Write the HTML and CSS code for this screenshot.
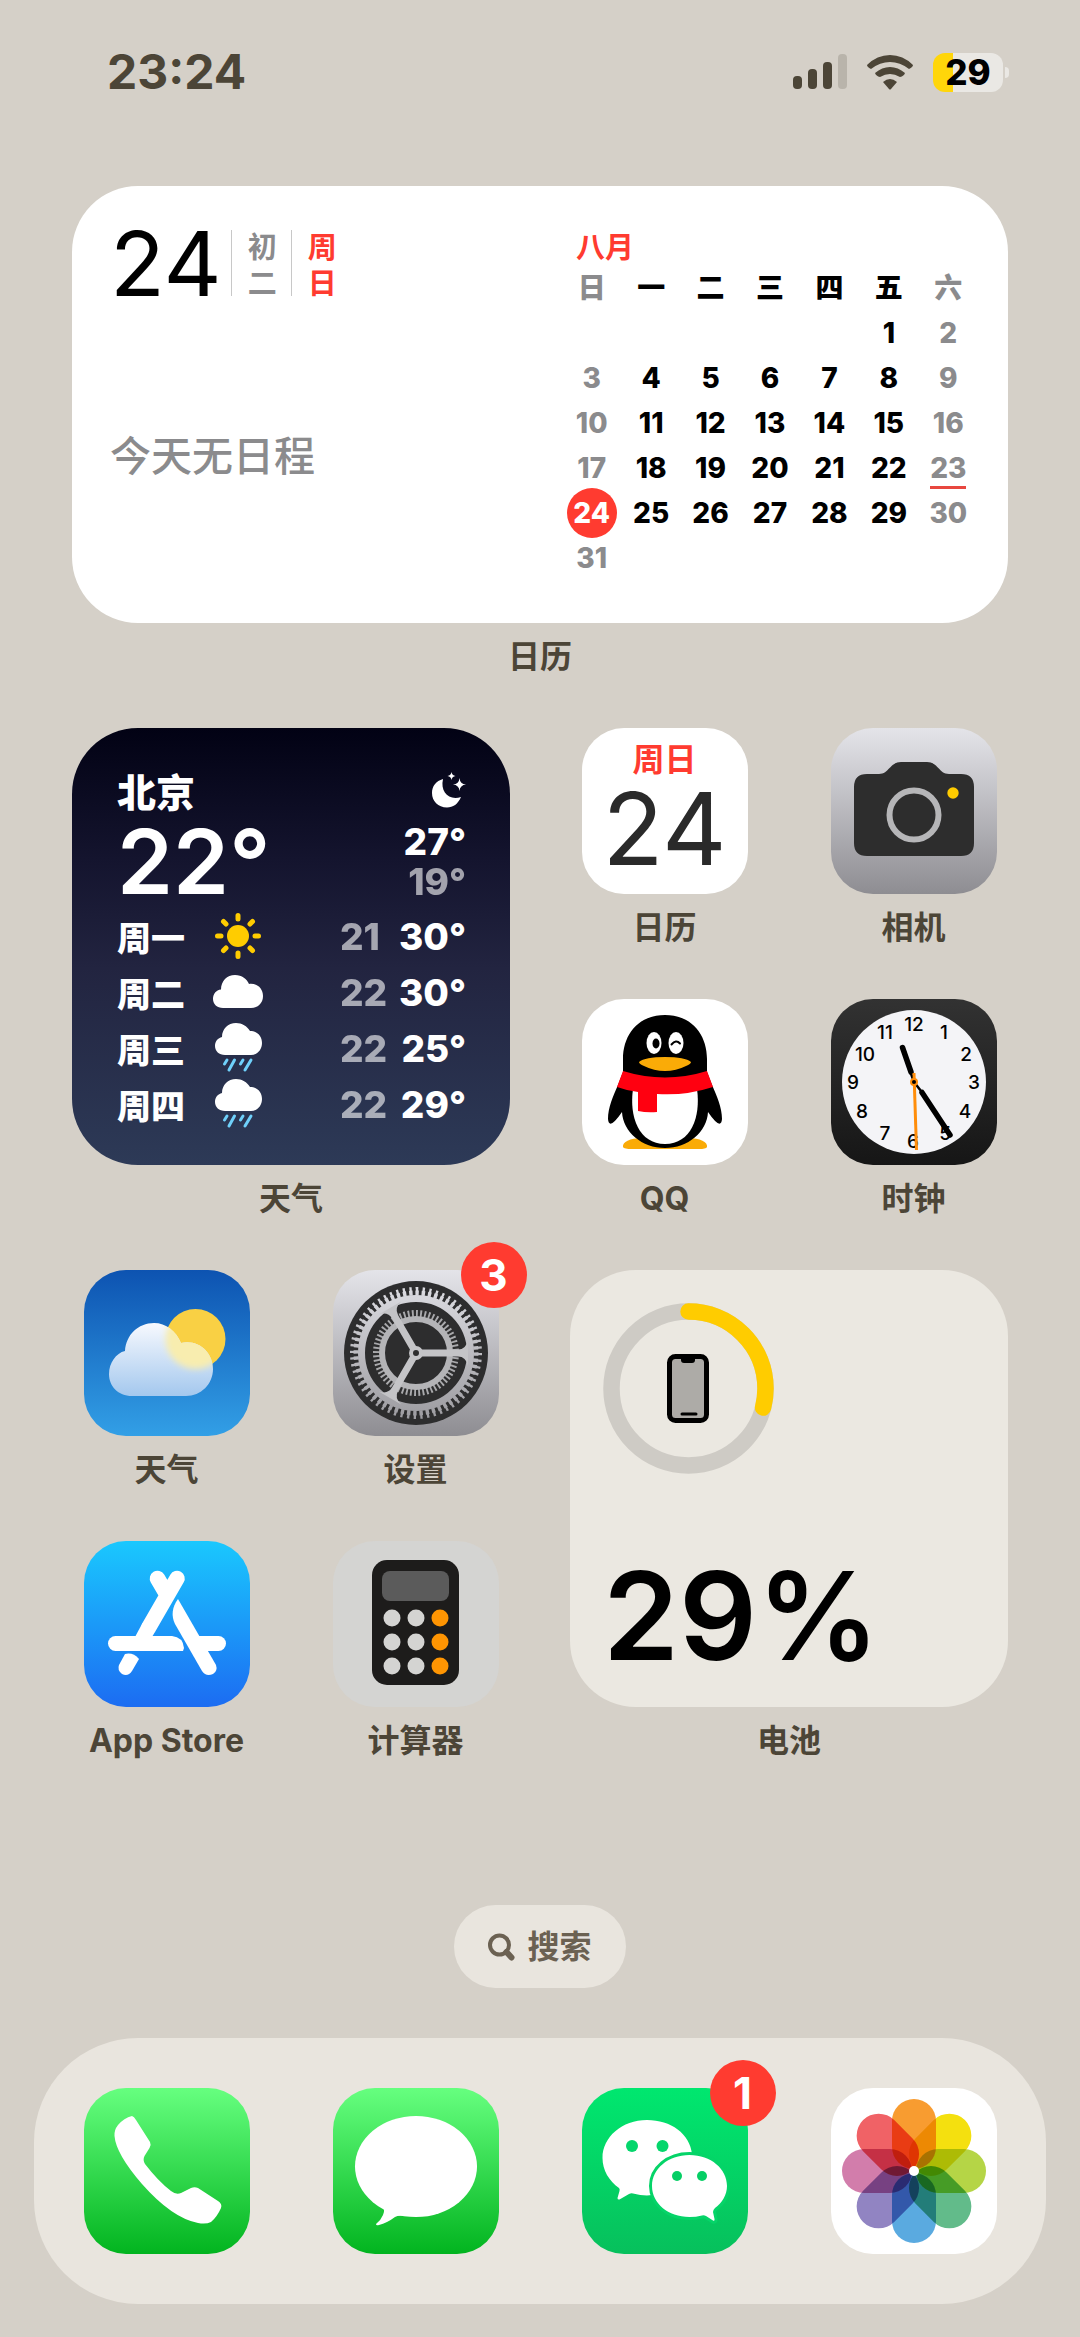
FILE: index.html
```html
<!DOCTYPE html>
<html lang="zh-CN">
<head>
    <meta charset="UTF-8">
    <meta name="viewport" content="width=device-width, initial-scale=1.0">
    <title>主屏幕</title>
    <link rel="stylesheet" href="styles.css">
</head>
<body>
<header class="status">
    <time class="status-time">23:24</time>
    <div class="status-icons">
        <svg class="signal" viewBox="0 0 54 36">
            <rect x="0" y="22" width="9" height="13" rx="4"/>
            <rect x="15" y="15" width="9" height="20" rx="4"/>
            <rect x="30" y="8" width="9" height="27" rx="4"/>
            <rect x="45" y="0" width="9" height="35" rx="4" opacity=".2"/>
        </svg>
        <svg class="wifi" viewBox="0 0 46 35">
            <path d="M0 10 Q10 0 23 0 Q36 0 46 10 Q46 12 42 14 Q33 7 23 7 Q13 7 4 14 Q0 12 0 10Z"/>
            <path d="M8 18 Q15 12 23 12 Q31 12 38 18 Q37 21 33 22 Q28 19 23 19 Q18 19 13 22 Q9 21 8 18Z"/>
            <path d="M16 27 Q23 21 30 27 L24 34 Q23 35 22 34Z"/>
        </svg>
        <div class="battery">29</div>
    </div>
</header>

<main class="home">
    <section class="widget widget-wide">
        <div class="card calendar">
            <div class="today">
                <div class="today-date">
                    <span class="today-num">24</span>
                    <span class="today-col">初二</span>
                    <span class="today-col red">周日</span>
                </div>
                <p class="today-note">今天无日程</p>
            </div>
            <table class="month">
                <caption>八月</caption>
                <thead>
                    <tr><th>日</th><th>一</th><th>二</th><th>三</th><th>四</th><th>五</th><th>六</th></tr>
                </thead>
                <tbody>
                    <tr><td></td><td></td><td></td><td></td><td></td><td>1</td><td>2</td></tr>
                    <tr><td>3</td><td>4</td><td>5</td><td>6</td><td>7</td><td>8</td><td>9</td></tr>
                    <tr><td>10</td><td>11</td><td>12</td><td>13</td><td>14</td><td>15</td><td>16</td></tr>
                    <tr><td>17</td><td>18</td><td>19</td><td>20</td><td>21</td><td>22</td><td><span class="marked">23</span></td></tr>
                    <tr><td><span class="current">24</span></td><td>25</td><td>26</td><td>27</td><td>28</td><td>29</td><td>30</td></tr>
                    <tr><td>31</td><td></td><td></td><td></td><td></td><td></td><td></td></tr>
                </tbody>
            </table>
        </div>
        <span class="label">日历</span>
    </section>

    <section class="widget">
        <div class="card weather">
            <div class="weather-head">
                <span class="city">北京</span>
                <svg class="moon" viewBox="0 0 34 36">
                    <path d="M11 7 C8 20 17 29 29 25 C26 32 21 35.500 15 35.500 C6 35.500 0 29 0 21 C0 14 4 9 11 7Z"/>
                    <path d="M27.500 6 Q28 12 34 12.500 Q28 13 27.500 19 Q27 13 21 12.500 Q27 12 27.500 6Z"/>
                    <path d="M19.500 0 Q20 3.500 23.500 4 Q20 4.500 19.500 8 Q19 4.500 15.500 4 Q19 3.500 19.500 0Z"/>
                </svg>
            </div>
            <div class="weather-now">
                <span class="temp">22°</span>
                <div class="range">
                    <span>27°</span>
                    <span class="low">19°</span>
                </div>
            </div>
            <ul class="forecast">
                <li>
                    <span>周一</span>
                    <svg viewBox="0 0 50 50">
                        <circle cx="25" cy="25" r="11" fill="#ffcc00"/>
                        <g stroke="#ffcc00" stroke-width="5" stroke-linecap="round">
                            <path d="M25 4.500V8M25 42V45.500M4.500 25H8M42 25H45.500M10.500 10.500L13 13M37 37L39.500 39.500M10.500 39.500L13 37M37 13L39.500 10.500"/>
                        </g>
                    </svg>
                    <span class="low">21</span>
                    <span>30°</span>
                </li>
                <li>
                    <span>周二</span>
                    <svg viewBox="0 0 50 50">
                        <path fill="#fff" d="M10 41 C4 41 0 37 0 32 C0 27 3 23 8 22.500 C8 14 14 8 22 8 C29 8 34 12 36 17 C44 16 50 21 50 29 C50 36 45 41 38 41Z"/>
                    </svg>
                    <span class="low">22</span>
                    <span>30°</span>
                </li>
                <li>
                    <span>周三</span>
                    <svg viewBox="0 0 50 50">
                        <path fill="#fff" d="M12 32 C6 32 2 28 2 23 C2 18 5 15 9 14 C9 6 15 0 23 0 C29 0 34 3 37 8 C44 8 49 13 49 20 C49 27 44 32 38 32Z"/>
                        <path stroke="#6fd0fa" stroke-width="3" stroke-linecap="round" d="M14 37L11.500 41M21.500 37L16 47M30 37L27.500 41M38 37L32 47"/>
                    </svg>
                    <span class="low">22</span>
                    <span>25°</span>
                </li>
                <li>
                    <span>周四</span>
                    <svg viewBox="0 0 50 50">
                        <path fill="#fff" d="M12 32 C6 32 2 28 2 23 C2 18 5 15 9 14 C9 6 15 0 23 0 C29 0 34 3 37 8 C44 8 49 13 49 20 C49 27 44 32 38 32Z"/>
                        <path stroke="#6fd0fa" stroke-width="3" stroke-linecap="round" d="M14 37L11.500 41M21.500 37L16 47M30 37L27.500 41M38 37L32 47"/>
                    </svg>
                    <span class="low">22</span>
                    <span>29°</span>
                </li>
            </ul>
        </div>
        <span class="label">天气</span>
    </section>

    <a class="app" href="#calendar">
        <span class="icon icon-calendar">
            <span class="icon-day">周日</span>
            <span class="icon-num">24</span>
        </span>
        <span class="label">日历</span>
    </a>

    <a class="app" href="#camera">
        <span class="icon icon-metal">
            <svg viewBox="0 0 166 166">
                <path fill="#2d2d2d" d="M36 46 H48 C58 46 59 34 70 34 H96 C107 34 108 46 118 46 H130 Q143 46 143 59 V115 Q143 128 130 128 H36 Q23 128 23 115 V59 Q23 46 36 46Z"/>
                <circle cx="83" cy="87" r="24.500" fill="none" stroke="#b6b6b8" stroke-width="6"/>
                <circle cx="122" cy="65" r="5.700" fill="#ffcc00"/>
            </svg>
        </span>
        <span class="label">相机</span>
    </a>

    <a class="app" href="#qq">
        <span class="icon icon-white">
            <svg viewBox="0 0 166 166">
                <path fill="#faab07" d="M60 139 C48 139 40 143 41 148 Q42 150 50 150 H117 Q124 150 125 148 C126 143 118 139 106 139Z"/>
                <path d="M83 16 C56 16 41 36 41 60 V73 L36 86 C31 97 26 109 26 120 Q27 132 40 113 C41 133 60 149 83 149 C106 149 125 133 126 113 Q139 132 140 120 C140 109 135 97 130 86 L125 73 V60 C125 36 110 16 83 16Z"/>
                <path fill="#fff" d="M51 90 H115 C119 118 109 145 83 145 C57 145 47 118 51 90Z"/>
                <ellipse cx="72" cy="44" rx="7.500" ry="11" fill="#fff"/>
                <ellipse cx="94" cy="44" rx="7.500" ry="11" fill="#fff"/>
                <ellipse cx="74" cy="44.500" rx="3.500" ry="5"/>
                <path d="M89.500 45.500 Q94 40 98 44.500" fill="none" stroke="#000" stroke-width="2" stroke-linecap="round"/>
                <path fill="#faab07" d="M57 63 Q63 58 83 58 Q103 58 109 63 Q109 65 104 67 Q94 72 83 72 Q72 72 62 67 Q57 65 57 63Z"/>
                <path fill="#ff0010" d="M41 72 Q83 85 125 72 L131 88 Q103 97 75 95 V113 Q65 114 56 112 V93 Q46 92 35 88Z"/>
            </svg>
        </span>
        <span class="label">QQ</span>
    </a>

    <a class="app" href="#clock">
        <span class="icon icon-clock">
            <svg viewBox="0 0 166 166">
                <circle cx="83" cy="83" r="72" fill="#f4f4f7"/>
                <g font-size="19" font-weight="500" text-anchor="middle">
                    <text x="83" y="32">12</text>
                    <text x="113" y="40">1</text>
                    <text x="135" y="62">2</text>
                    <text x="143" y="90">3</text>
                    <text x="134" y="119">4</text>
                    <text x="114" y="141">5</text>
                    <text x="82" y="149">6</text>
                    <text x="54" y="141">7</text>
                    <text x="31" y="119">8</text>
                    <text x="22" y="90">9</text>
                    <text x="34" y="62">10</text>
                    <text x="54" y="40">11</text>
                </g>
                <g stroke="#000" stroke-linecap="round">
                    <path stroke-width="2.500" d="M83 83L78 69M83 83L90 92"/>
                    <path stroke-width="5.500" d="M80 73L71.500 48.500M91 93.500L119 136"/>
                </g>
                <path stroke="#ff8d0a" stroke-width="3" d="M83 74L85.500 151"/>
                <circle cx="83" cy="83" r="3" fill="#000" stroke="#ff8d0a" stroke-width="2"/>
            </svg>
        </span>
        <span class="label">时钟</span>
    </a>

    <a class="app" href="#weather">
        <span class="icon icon-weather">
            <svg viewBox="0 0 166 166">
                <defs>
                    <linearGradient id="cloud" x1="0" y1="53" x2="0" y2="126" gradientUnits="userSpaceOnUse">
                        <stop offset="0" stop-color="#f7f9fe"/>
                        <stop offset="1" stop-color="#a4c8ee"/>
                    </linearGradient>
                    <filter id="soft"><feGaussianBlur stdDeviation="3"/></filter>
                    <clipPath id="cloudShape">
                        <path d="M48 126 C34 126 25 116 25 104 C25 93 32 83 41 81 C42 65 54 53 70 53 C82 53 92 61 97 73 C115 69 129 83 129 99 C129 114 117 126 102 126Z"/>
                    </clipPath>
                </defs>
                <circle cx="111.500" cy="69" r="30" fill="#f9d044"/>
                <g clip-path="url(#cloudShape)">
                    <rect width="166" height="166" fill="url(#cloud)"/>
                    <circle cx="111.500" cy="69" r="30" fill="#f8edaf" filter="url(#soft)"/>
                </g>
            </svg>
        </span>
        <span class="label">天气</span>
    </a>

    <a class="app" href="#settings">
        <span class="icon icon-metal">
            <svg viewBox="0 0 166 166">
                <defs>
                    <linearGradient id="metal" x1="0" y1="-83" x2="0" y2="83" gradientUnits="userSpaceOnUse">
                        <stop offset="0" stop-color="#e4e4e9"/>
                        <stop offset="1" stop-color="#949398"/>
                    </linearGradient>
                </defs>
                <g transform="translate(83 83)" fill="none">
                    <circle r="72" fill="#2d2d2e"/>
                    <!-- outer gear -->
                    <circle r="62" stroke="url(#metal)" stroke-width="8" pathLength="240" stroke-dasharray="1.400 2.600"/>
                    <circle r="60" stroke="url(#metal)" stroke-width="5" pathLength="240" stroke-dasharray="2.200 1.800" stroke-dashoffset=".4"/>
                    <circle r="54.500" stroke="url(#metal)" stroke-width="7"/>
                    <!-- inner gear -->
                    <circle r="39.500" stroke="#a9a9ac" stroke-width="7" pathLength="240" stroke-dasharray="1.800 2.200"/>
                    <circle r="34" stroke="#b4b4b7" stroke-width="6"/>
                    <!-- spokes -->
                    <g fill="#c4c4c7">
                        <path d="M0 -3.500 H42 Q50 -3.500 52 -13 V13 Q50 3.500 42 3.500 H0Z"/>
                        <path d="M0 -3.500 H42 Q50 -3.500 52 -13 V13 Q50 3.500 42 3.500 H0Z" transform="rotate(120)"/>
                        <path d="M0 -3.500 H42 Q50 -3.500 52 -13 V13 Q50 3.500 42 3.500 H0Z" transform="rotate(240)"/>
                        <circle r="7"/>
                    </g>
                    <circle r="3" fill="#2d2d2e"/>
                </g>
            </svg>
            <span class="badge">3</span>
        </span>
        <span class="label">设置</span>
    </a>

    <section class="widget">
        <div class="card power">
            <svg class="ring" viewBox="0 0 171 171">
                <g fill="none" stroke-width="16.500">
                    <circle cx="85.500" cy="85.500" r="77" stroke="#cecbc5"/>
                    <circle cx="85.500" cy="85.500" r="77" stroke="#ffcc00" stroke-linecap="round" pathLength="100" stroke-dasharray="29 71" transform="rotate(-90 85.500 85.500)"/>
                </g>
                <rect x="66.500" y="53.500" width="37" height="64" rx="6" fill="#adaba7" stroke="#000" stroke-width="5"/>
                <path d="M78 54 H92 V57 Q92 60 89 60 H81 Q78 60 78 57Z"/>
                <path d="M79 111H93" stroke="#000" stroke-width="3" stroke-linecap="round"/>
            </svg>
            <span class="percent">29%</span>
        </div>
        <span class="label">电池</span>
    </section>

    <a class="app" href="#appstore">
        <span class="icon icon-store">
            <svg viewBox="0 0 166 166" fill="#fff">
                <path stroke="#fff" stroke-width="15.500" stroke-linecap="round" d="M93 37.500L65 86M73.500 37.500L82 52"/>
                <path d="M58.500 82 L71.500 90 L68 96 H51Z"/>
                <path d="M31.500 95 H88 Q99 96 100 107 L99 110 H31.500 A7.500 7.500 0 0 1 31.500 95Z"/>
                <path d="M112 95 H134.500 A7.500 7.500 0 0 1 134.500 110 H121Z"/>
                <path d="M94 58 L132 124 Q134 130 129 133 Q122 136 118 130 L91 83 C87 75 88 66 94 58Z"/>
                <path d="M41 113 Q49 111 55 118 L48 130 Q44 136 38 133 Q33 129 35 124Z"/>
            </svg>
        </span>
        <span class="label">App Store</span>
    </a>

    <a class="app" href="#calculator">
        <span class="icon icon-calc">
            <svg viewBox="0 0 166 166">
                <rect x="39" y="19" width="87" height="125" rx="15" fill="#1d1c1b"/>
                <rect x="49" y="30" width="67" height="30" rx="8" fill="#5b5b5b"/>
                <g fill="#d4d4d2">
                    <circle cx="59" cy="77" r="8.500"/><circle cx="83" cy="77" r="8.500"/>
                    <circle cx="59" cy="101" r="8.500"/><circle cx="83" cy="101" r="8.500"/>
                    <circle cx="59" cy="125" r="8.500"/><circle cx="83" cy="125" r="8.500"/>
                </g>
                <g fill="#ff9502">
                    <circle cx="107" cy="77" r="8.500"/>
                    <circle cx="107" cy="101" r="8.500"/>
                    <circle cx="107" cy="125" r="8.500"/>
                </g>
            </svg>
        </span>
        <span class="label">计算器</span>
    </a>
</main>

<button class="search" type="button">
    <svg viewBox="0 0 27 28" fill="none" stroke="#6b6152" stroke-linecap="round">
        <circle cx="11.500" cy="12" r="9.500" stroke-width="4"/>
        <path d="M18.500 19L23.500 24.500" stroke-width="6"/>
    </svg>
    搜索
</button>

<nav class="dock">
    <a class="icon icon-green" href="#phone" aria-label="电话">
        <svg viewBox="0 0 166 166">
            <path fill="#fff" d="M48 28 Q50 28.500 52 32 L66 54 Q67.500 57 65.500 60 L60.500 68 Q58.500 72 61 76 Q74 93 87 103 Q92 107 97 105 L107 100 Q110.500 98.500 114 100 L134 113 Q138.500 116 137 120 Q133 129 127 134 Q122 136.500 114 135 Q88 130 58 96 Q32 66 30.500 48 Q30 42 34 37 Q40 30 48 28Z"/>
        </svg>
    </a>
    <a class="icon icon-green" href="#messages" aria-label="信息">
        <svg viewBox="0 0 166 166" fill="#fff">
            <ellipse cx="83" cy="78.500" rx="61" ry="50.500"/>
            <path d="M47 117 Q53 121 50 127 Q48 132 43 136 Q43 138 46 137 Q54 135 62 129 Q65 127 72 128Z"/>
        </svg>
    </a>
    <a class="icon icon-wechat" href="#wechat" aria-label="微信">
        <svg viewBox="0 0 166 166" fill="#fff">
            <path d="M65 32 C40 32 20.500 49 20.500 70 C20.500 82 27 93 37 100 Q38 101 37.500 103 L35.500 110 Q35.500 112 37.500 111.500 L47 106 Q49 105 51 105.500 Q65 109 75 106 L110 66 C108 46 89 32 65 32Z"/>
            <circle cx="50" cy="58" r="6" fill="#05d66c"/>
            <circle cx="80.500" cy="58" r="6" fill="#05d66c"/>
            <path stroke="#05d468" stroke-width="6" paint-order="stroke" d="M107.500 67 C86 67 70 81 70 98 C70 115 86 129 107.500 129 Q114 129 120 127.500 Q122 127 124 128 L131 132.500 Q133 133.500 132.500 131 L131 124 Q131 122 133 120 C140 115 145 107 145 98 C145 81 129 67 107.500 67Z"/>
            <circle cx="95" cy="88" r="5" fill="#05cf65"/>
            <circle cx="120" cy="88" r="5" fill="#05cf65"/>
        </svg>
        <span class="badge">1</span>
    </a>
    <a class="icon icon-white" href="#photos" aria-label="照片">
        <svg class="photos" viewBox="-83 -83 166 166">
            <rect x="-22" y="-72" width="44" height="70" rx="22" fill="#f89c30"/>
            <rect x="-22" y="-72" width="44" height="70" rx="22" fill="#f4e00f" transform="rotate(45)"/>
            <rect x="-22" y="-72" width="44" height="70" rx="22" fill="#b5d546" transform="rotate(90)"/>
            <rect x="-22" y="-72" width="44" height="70" rx="22" fill="#62bb8a" transform="rotate(135)"/>
            <rect x="-22" y="-72" width="44" height="70" rx="22" fill="#5aaae0" transform="rotate(180)"/>
            <rect x="-22" y="-72" width="44" height="70" rx="22" fill="#9184c2" transform="rotate(225)"/>
            <rect x="-22" y="-72" width="44" height="70" rx="22" fill="#d27dab" transform="rotate(270)"/>
            <rect x="-22" y="-72" width="44" height="70" rx="22" fill="#f06266" transform="rotate(315)"/>
            <circle r="5" fill="#fff"/>
        </svg>
    </a>
</nav>
</body>
</html>
```

FILE: styles.css
```css
* {
    box-sizing: border-box;
}
body {
    margin: 0;
    min-height: 100vh;
    background-color: #d5d0c8;
    color: #4c4537;
    font-family: Inter, "Noto Sans CJK SC", sans-serif;
    display: flex;
    flex-direction: column;
}
a {
    color: inherit;
    text-decoration: none;
}
svg {
    display: block;
}

/* status bar */
.status {
    height: 186px;
    padding: 42px 70px 0 107px;
    display: flex;
    justify-content: space-between;
    align-items: flex-start;
}
.status-time {
    font-size: 48px;
    line-height: 60px;
    font-weight: 700;
}
.status-icons {
    height: 60px;
    display: flex;
    align-items: center;
    gap: 20px;
    fill: #4c4537;
}
.signal {
    width: 54px;
    height: 36px;
}
.wifi {
    width: 46px;
    height: 35px;
}
.battery {
    position: relative;
    width: 70px;
    height: 39px;
    margin-right: 7px;
    border-radius: 12px;
    background: linear-gradient(to right, #ffd60a 29%, #eae8e4 29%);
    color: #000;
    font-size: 35px;
    line-height: 39px;
    font-weight: 800;
    text-align: center;
}
.battery::after {
    content: "";
    position: absolute;
    left: 72px;
    top: 14px;
    width: 4px;
    height: 11px;
    border-radius: 0 4px 4px 0;
    background-color: #eae8e4;
}

/* home grid */
.home {
    padding: 0 42px;
    display: grid;
    grid-template-columns: repeat(4, 1fr);
    grid-auto-rows: 271px;
}
.widget {
    grid-column: span 2;
    grid-row: span 2;
    padding: 0 30px;
    text-align: center;
}
.widget-wide {
    grid-column: span 4;
}
.card {
    height: 437px;
    border-radius: 66px;
    text-align: left;
}
.label {
    display: block;
    margin-top: 16px;
    font-size: 32px;
    line-height: 36px;
    font-weight: 700;
    text-align: center;
    white-space: nowrap;
}
.app {
    display: flex;
    flex-direction: column;
    align-items: center;
}
.icon {
    position: relative;
    display: block;
    width: 166px;
    height: 166px;
    border-radius: 42px;
}
.badge {
    position: absolute;
    top: -28px;
    right: -28px;
    width: 66px;
    height: 66px;
    border-radius: 50%;
    background-color: #ff3b30;
    color: #fff;
    font-size: 44px;
    line-height: 66px;
    font-weight: 700;
    text-align: center;
}

/* calendar widget */
.calendar {
    background-color: #fff;
    padding: 44px 30px 0 38px;
    display: flex;
    justify-content: space-between;
}
.today-date {
    display: flex;
    align-items: flex-start;
}
.today-num {
    margin-right: 9px;
    color: #000;
    font-size: 90px;
    line-height: 68px;
}
.today-col {
    width: 60px;
    height: 66px;
    padding: 0 16px;
    border-left: 1px solid #c8c8c8;
    color: #8b8b8d;
    font-size: 29px;
    line-height: 36px;
    font-weight: 700;
}
.red {
    color: #ff3b30;
}
.today-note {
    margin: 128px 0 0;
    color: #8b8b8d;
    font-size: 41px;
    line-height: 60px;
    font-weight: 500;
}
.month {
    width: 416px;
    border-collapse: collapse;
    table-layout: fixed;
    align-self: flex-start;
}
.month caption {
    padding-left: 14px;
    color: #ff3b30;
    font-size: 29px;
    line-height: 36px;
    font-weight: 700;
    text-align: left;
}
.month th,
.month td {
    height: 45px;
    padding: 0;
    color: #000;
    font-size: 28px;
    line-height: 45px;
    font-weight: 800;
    text-align: center;
}
.month th:first-child,
.month th:last-child,
.month td:first-child,
.month td:last-child {
    color: #8b8b8d;
}
.month span {
    position: relative;
    z-index: 0;
}
.month .current {
    color: #fff;
}
.current::before {
    content: "";
    position: absolute;
    z-index: -1;
    left: 50%;
    top: 50%;
    width: 50px;
    height: 50px;
    transform: translate(-50%, -50%);
    border-radius: 50%;
    background-color: #ff3b30;
}
.marked::after {
    content: "";
    position: absolute;
    left: 0;
    right: 0;
    bottom: -4px;
    height: 3px;
    background-color: #e8473f;
}

/* weather widget */
.weather {
    padding: 34px 44px 0 45px;
    background: linear-gradient(#020214, #14142e 30%, #222440 55%, #2d3a57);
    color: #fff;
    font-weight: 800;
}
.weather-head {
    height: 56px;
    display: flex;
    justify-content: space-between;
    align-items: center;
}
.city {
    font-size: 39px;
}
.moon {
    width: 34px;
    height: 36px;
    fill: #fff;
}
.weather-now {
    margin-top: 4px;
    display: flex;
    justify-content: space-between;
}
.temp {
    font-size: 90px;
    line-height: 80px;
    font-weight: 600;
}
.range {
    display: flex;
    flex-direction: column;
    font-size: 37px;
    line-height: 40px;
    text-align: right;
}
.low {
    opacity: .6;
}
.forecast {
    margin: 6px 0 0;
    padding: 0;
    list-style: none;
}
.forecast li {
    height: 56px;
    display: grid;
    grid-template-columns: 96px 50px 1fr 56px 70px;
    align-items: center;
    font-size: 37px;
    white-space: nowrap;
}
.forecast li span:first-child {
    font-size: 34px;
}
.forecast li span:last-child {
    text-align: right;
}
.forecast svg {
    width: 50px;
    height: 50px;
}
.forecast .low {
    grid-column: 4;
}

/* battery widget */
.power {
    padding: 33px 33px 0;
    background-color: #ebe8e1;
}
.ring {
    width: 171px;
    height: 171px;
}
.percent {
    display: block;
    margin-top: 80px;
    color: #000;
    font-size: 122px;
    line-height: 124px;
    font-weight: 600;
}

/* app icons */
.icon-calendar {
    padding-top: 14px;
    background-color: #fff;
    text-align: center;
}
.icon-day {
    display: block;
    color: #ff3b30;
    font-size: 32px;
    line-height: 36px;
    font-weight: 700;
}
.icon-num {
    display: block;
    color: #2a2a2a;
    font-size: 100px;
    line-height: 102px;
    font-weight: 400;
}
.icon-white {
    background-color: #fff;
}
.icon-metal {
    background: linear-gradient(#e4e4e9, #8e8d92);
}
.icon-clock {
    background: linear-gradient(#323232, #161616);
}
.icon-weather {
    background: linear-gradient(#0d53b1, #329fe6);
}
.icon-store {
    background: linear-gradient(#1ac8fe, #1c6cf2);
}
.icon-calc {
    background-color: #d4d4d2;
}
.icon-green {
    background: linear-gradient(#66ff7f, #02b41f);
}
.icon-wechat {
    background: linear-gradient(#00e76f, #07c05c);
}
.photos {
    isolation: isolate;
}
.photos rect {
    mix-blend-mode: multiply;
}

/* search and dock */
.search {
    align-self: center;
    margin-top: 93px;
    width: 172px;
    height: 83px;
    padding: 0;
    border: 0;
    border-radius: 42px;
    background-color: #e9e5de;
    color: #6b6152;
    font: inherit;
    font-size: 32px;
    font-weight: 700;
    line-height: 36px;
    display: flex;
    justify-content: center;
    align-items: center;
    gap: 12px;
}
.search svg {
    width: 27px;
    height: 28px;
}
.dock {
    margin: 50px 34px 33px;
    padding: 50px 8px;
    border-radius: 104px;
    background-color: #e9e5de;
    display: grid;
    grid-template-columns: repeat(4, 1fr);
    justify-items: center;
}
```
